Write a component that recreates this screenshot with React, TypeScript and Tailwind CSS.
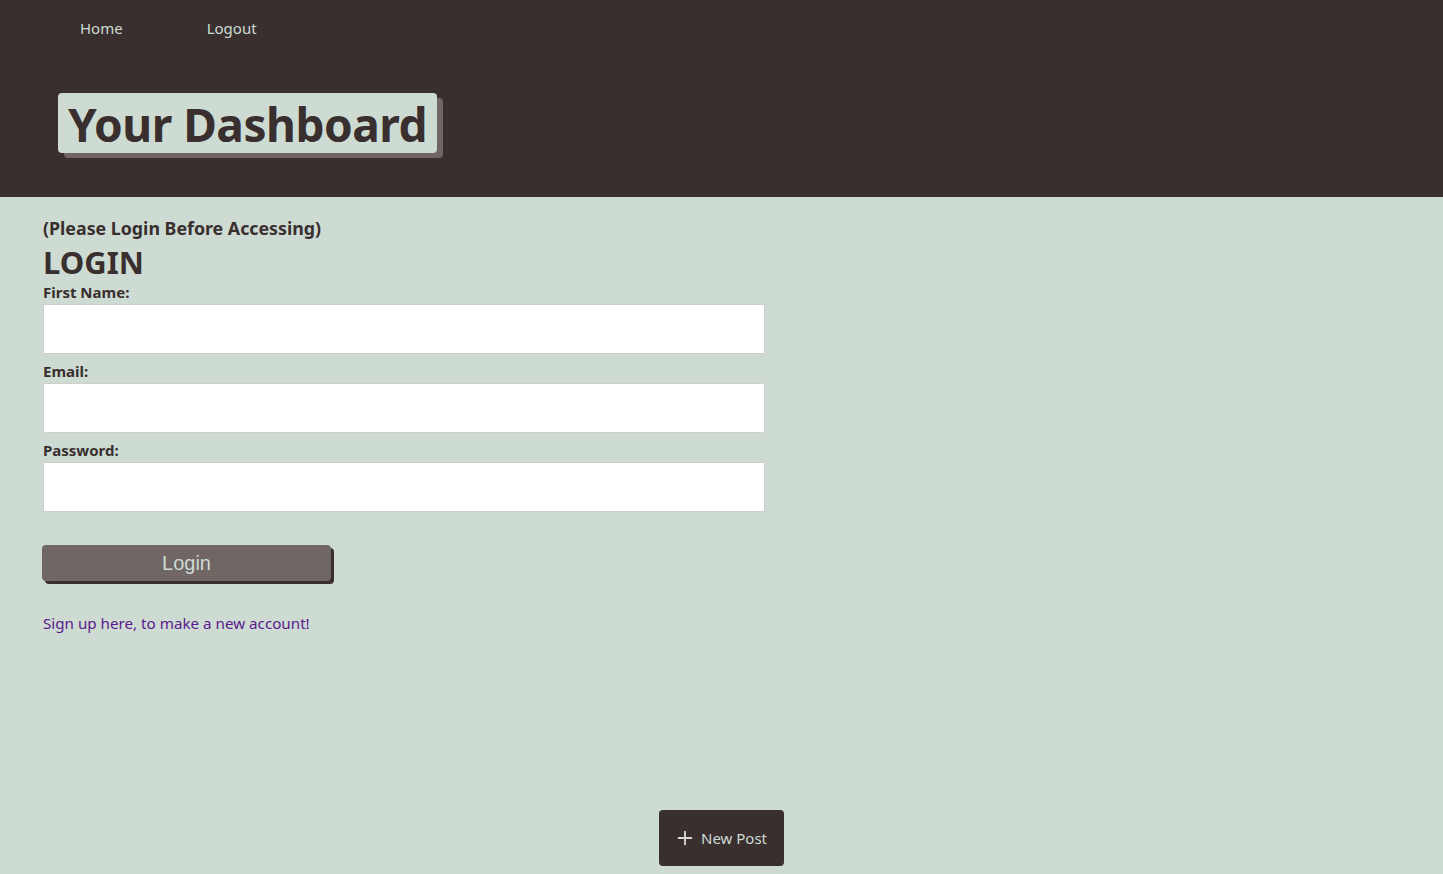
import { Plus } from "lucide-react";

export default function App() {
    return (
        <div
            className="min-h-[874px] bg-[#cddbd3] text-[#392f2f] flex flex-col"
            style={{ fontFamily: '"Noto Sans", "Open Sans", sans-serif' }}
        >
            {/* Header */}
            <header className="bg-[#392f2f] h-[197px] flex flex-col">
                <nav className="flex pl-[80px] pt-[17px] gap-[84px] text-[15px] text-[#cddbd3]">
                    <a href="#">Home</a>
                    <a href="#">Logout</a>
                </nav>
                <div className="pl-[58px] pt-[53px]">
                    <h1 className="inline-block bg-[#cddbd3] rounded-[4px] px-[10px] h-[60px] leading-[62px] text-[46px] font-bold tracking-[-0.5px] text-[#392f2f] shadow-[6px_5px_0_#706664]">
                        Your Dashboard
                    </h1>
                </div>
            </header>

            {/* Login form */}
            <main className="flex-1 px-[43px] pt-[16px] flex flex-col">
                <p className="text-[17.8px] font-bold leading-[30px]">(Please Login Before Accessing)</p>
                <h2 className="text-[31px] font-bold leading-[36px] mt-[1px]">LOGIN</h2>
                <form className="flex flex-col w-[722px]">
                    <label className="text-[15px] font-bold leading-[20px] mt-[2px]">First Name:</label>
                    <input className="h-[50px] bg-white border border-[#cfcfcf] mt-[2px]" />
                    <label className="text-[15px] font-bold leading-[20px] mt-[7px]">Email:</label>
                    <input className="h-[50px] bg-white border border-[#cfcfcf] mt-[2px]" />
                    <label className="text-[15px] font-bold leading-[20px] mt-[7px]">Password:</label>
                    <input className="h-[50px] bg-white border border-[#cfcfcf] mt-[2px]" />
                    <button
                        type="button"
                        className="mt-[33px] -ml-[1px] w-[289px] h-[36px] rounded-[4px] bg-[#706664] text-[#cddbd3] text-[20px] shadow-[3px_3px_0_#392f2f]"
                        style={{ fontFamily: '"Liberation Sans", Arial, sans-serif' }}
                    >
                        Login
                    </button>
                </form>
                <a href="#" className="mt-[31px] text-[15.2px] text-[#5a1a8c] w-fit">
                    Sign up here, to make a new account!
                </a>
                <div className="flex-1" />
                <div className="flex justify-center pb-[8px]">
                    <button className="flex items-center gap-[5px] bg-[#392f2f] text-[#cddbd3] rounded-[4px] w-[125px] h-[56px] justify-center text-[15px]">
                        <Plus size={22} strokeWidth={2} className="text-[#d8d8d8] -ml-[2px]" />
                        New Post
                    </button>
                </div>
            </main>
        </div>
    );
}
